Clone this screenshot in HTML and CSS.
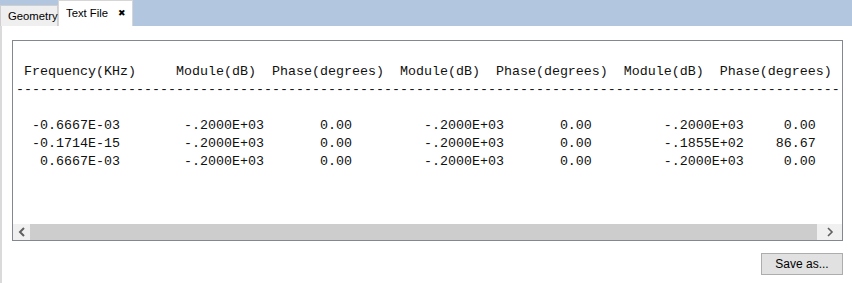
FILE: index.html
```html
<!DOCTYPE html>
<html>
<head>
<meta charset="utf-8">
<link rel="stylesheet" href="styles.css">
</head>
<body>
<div class="tabbar">
  <div class="tab tab-inactive">Geometry</div>
  <div class="tab tab-active"><span>Text File</span><span class="close">✖</span></div>
</div>
<div class="main">
  <div class="textbox">
    <pre class="text"> Frequency(KHz)     Module(dB)  Phase(degrees)  Module(dB)  Phase(degrees)  Module(dB)  Phase(degrees)
-------------------------------------------------------------------------------------------------------

  -0.6667E-03        -.2000E+03       0.00         -.2000E+03       0.00         -.2000E+03     0.00
  -0.1714E-15        -.2000E+03       0.00         -.2000E+03       0.00         -.1855E+02    86.67
   0.6667E-03        -.2000E+03       0.00         -.2000E+03       0.00         -.2000E+03     0.00</pre>
    <div class="hscroll">
      <div class="sbtn"><svg width="8" height="10" viewBox="0 0 8 10"><path d="M6 1 L2 5 L6 9" fill="none" stroke="#606060" stroke-width="2"/></svg></div>
      <div class="thumb"></div>
      <div class="sbtn sbtn-right"><svg width="8" height="10" viewBox="0 0 8 10"><path d="M2 1 L6 5 L2 9" fill="none" stroke="#606060" stroke-width="1.6"/></svg></div>
    </div>
  </div>
  <div class="actions">
    <button class="btn">Save as...</button>
  </div>
</div>
</body>
</html>
```
FILE: styles.css
```css
html, body {
  margin: 0;
  padding: 0;
  background: #ffffff;
  font-family: "Liberation Sans", Arial, sans-serif;
}
.tabbar {
  height: 26px;
  background: #b3c6df;
  display: flex;
  align-items: flex-end;
  box-sizing: border-box;
}
.tab {
  box-sizing: border-box;
  font-size: 11.3px;
  color: #000;
  display: flex;
  align-items: center;
  white-space: nowrap;
}
.tab-inactive {
  height: 21px;
  width: 58px;
  background: #efefef;
  border: 1px solid #cfcfcf;
  border-bottom: none;
  padding-left: 7px;
}
.tab-active {
  height: 26px;
  width: 75px;
  background: #ffffff;
  border: 1px solid #d6d6d6;
  border-bottom: none;
  padding-left: 7px;
  padding-bottom: 2px;
}
.close {
  font-size: 9px;
  margin-left: 10px;
  font-family: "DejaVu Sans", sans-serif;
}
.main {
  height: 257px;
  box-sizing: border-box;
  border-left: 2px solid #dadada;
  padding: 14px 10px 0 10px;
  display: flex;
  flex-direction: column;
}
.textbox {
  width: 831px;
  height: 201px;
  box-sizing: border-box;
  border: 1px solid #828790;
  display: flex;
  flex-direction: column;
}
.text {
  flex: 1;
  margin: 0;
  overflow: hidden;
  padding: 22px 0 0 3px;
  font-family: "Liberation Mono", "Courier New", monospace;
  font-size: 13.333px;
  line-height: 18px;
  color: #111;
  white-space: pre;
}
.hscroll {
  height: 16px;
  display: flex;
  background: #f0f0f0;
}
.sbtn {
  width: 17px;
  display: flex;
  align-items: center;
  justify-content: center;
  background: #f0f0f0;
}
.sbtn-right {
  width: 25px;
}
.thumb {
  flex: 1;
  background: #cdcdcd;
}
.actions {
  display: flex;
  justify-content: flex-end;
  margin-top: 12px;
  width: 831px;
}
.btn {
  width: 82px;
  height: 22px;
  box-sizing: border-box;
  background: #e1e1e1;
  border: 1px solid #adadad;
  font-family: "Liberation Sans", Arial, sans-serif;
  font-size: 12px;
  color: #000;
  padding: 0;
}
```
